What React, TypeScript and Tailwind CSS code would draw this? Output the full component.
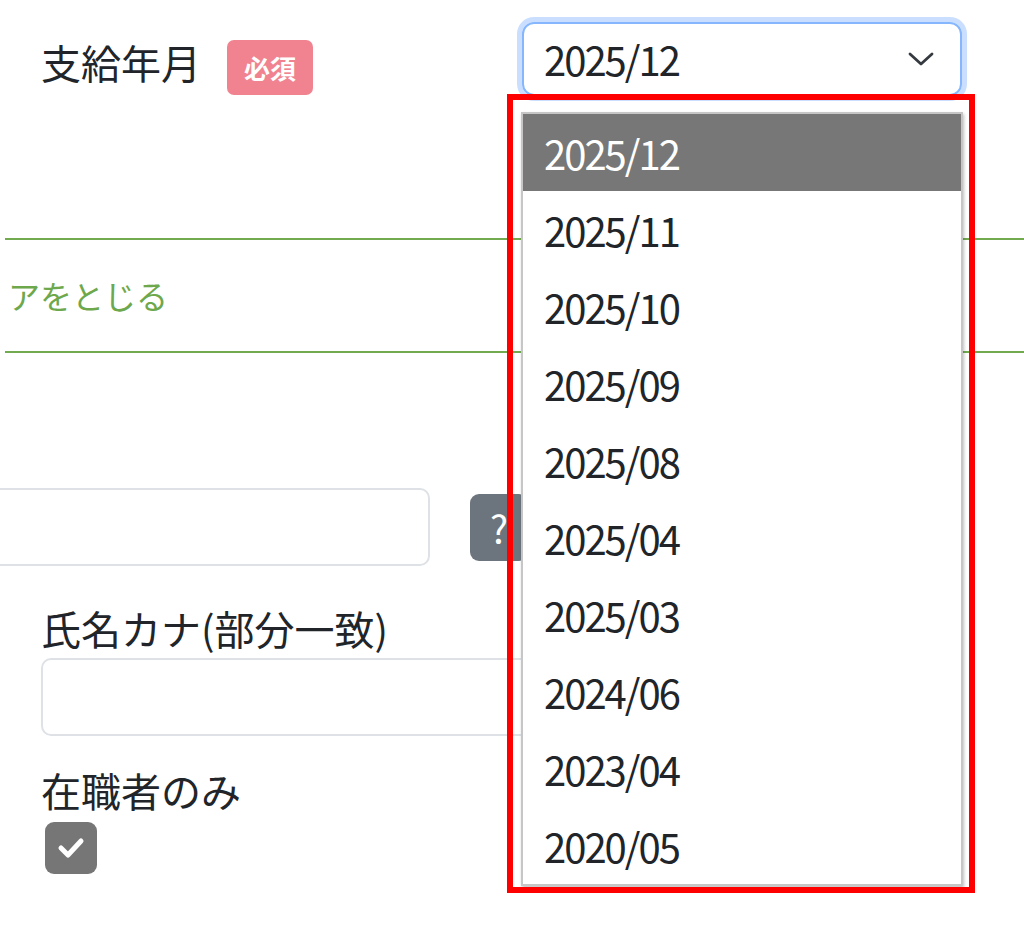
import React from "react";

const FONT = { fontFamily: '"Noto Sans CJK JP", "Noto Sans", sans-serif' };

const options = [
  "2025/12",
  "2025/11",
  "2025/10",
  "2025/09",
  "2025/08",
  "2025/04",
  "2025/03",
  "2024/06",
  "2023/04",
  "2020/05",
];

export default function App() {
  return (
    <div
      className="relative w-[1024px] h-[927px] overflow-hidden bg-white text-[#212529]"
      style={FONT}
    >
      {/* Row 1: 支給年月 + select */}
      <div className="flex h-[96px] pt-[22px]">
        <div className="flex w-[517px] items-start pl-[41px]">
          <span className="mt-[16px] text-[40px] leading-[48px]">支給年月</span>
          <span className="ml-[26px] mt-[18px] flex h-[55px] items-center rounded-[7px] bg-[#f0838f] px-[17px] text-[26px] font-bold leading-none text-white">
            必須
          </span>
        </div>
        <div className="ml-[5px] flex h-[74px] w-[440px] items-center justify-between rounded-[12px] border-2 border-[#86b7fe] pl-[20px] pr-[28px] shadow-[0_0_0_5px_rgba(13,110,253,0.22)]">
          <span className="text-[40px] leading-none tracking-[-2px]">2025/12</span>
          <svg width="26" height="16" viewBox="0 0 26 16" fill="none" className="mr-[-2px]">
            <path
              d="M2 3 L13 13 L24 3"
              stroke="#343a40"
              strokeWidth="2.8"
              strokeLinecap="round"
              strokeLinejoin="round"
            />
          </svg>
        </div>
      </div>

      {/* Green section */}
      <div className="ml-[5px] mt-[142px] flex h-[115px] items-center border-y-2 border-[#72aa4f] pl-[3px] pb-[2px]">
        <span className="text-[32px] leading-none text-[#6ea84c]">アをとじる</span>
      </div>

      {/* Input row with ? button */}
      <div className="mt-[135px] flex items-center">
        <div className="-ml-[40px] h-[78px] w-[470px] rounded-[10px] border-2 border-[#dee2e6] bg-white" />
        <div className="ml-[40px] flex h-[67px] w-[58px] items-center justify-center rounded-[9px] bg-[#6c757d] text-[38px] text-white">
          ?
        </div>
      </div>

      {/* 氏名カナ */}
      <div className="pl-[41px]">
        <div className="mt-[38px] text-[40px] leading-[48px]">氏名カナ(部分一致)</div>
        <div className="mt-[6px] h-[78px] w-[600px] rounded-[10px] border-2 border-[#dee2e6] bg-white" />
        <div className="mt-[30px] text-[40px] leading-[48px]">在職者のみ</div>
        <div className="ml-[4px] mt-[8px] flex h-[52px] w-[52px] items-center justify-center rounded-[9px] bg-[#767676]">
          <svg width="28" height="22" viewBox="0 0 28 22" fill="none">
            <path
              d="M4 11 L11 18 L24 4"
              stroke="white"
              strokeWidth="5"
              strokeLinecap="round"
              strokeLinejoin="round"
            />
          </svg>
        </div>
      </div>

      {/* Open dropdown list (overlay) */}
      <div className="absolute left-[521px] top-[112px] w-[442px] border-2 border-[#c6c6c6] bg-white shadow-[1px_2px_3px_rgba(0,0,0,0.25)]">
        {options.map((o, i) => (
          <div
            key={o}
            className={
              i === 0
                ? "flex h-[77px] items-center bg-[#777777] pl-[21px] text-[40px] leading-none tracking-[-2px] text-white"
                : "flex h-[77px] items-center pl-[21px] text-[40px] leading-none tracking-[-2px] text-[#212529]"
            }
          >
            {o}
          </div>
        ))}
      </div>

      {/* Red highlight box */}
      <div className="absolute left-[507px] top-[94px] h-[799px] w-[468px] border-[6px] border-[#ff0000]" />
    </div>
  );
}
